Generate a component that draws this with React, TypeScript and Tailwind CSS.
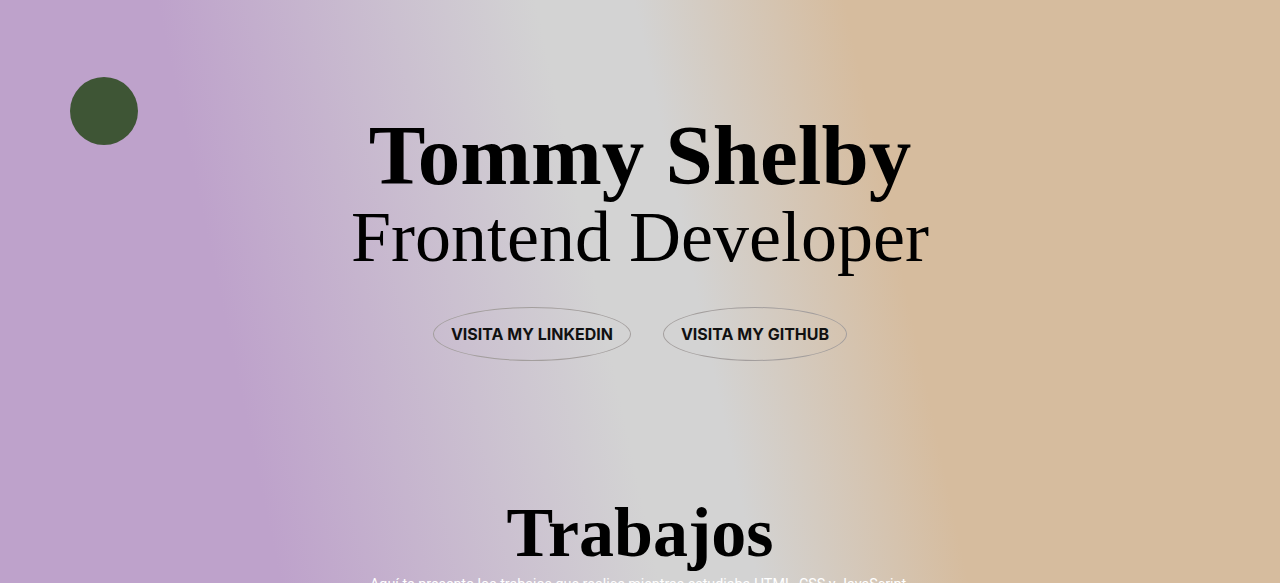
import React from "react";

const links = [
    { label: "Visita my LinkedIn", href: "#linkedin" },
    { label: "Visita my GitHub", href: "#github" },
];

export default function App() {
    return (
        <div className="relative h-screen w-full overflow-hidden bg-[linear-gradient(78deg,#bea2cb_20%,#d3d3d3_47%,#d3d3d3_54%,#d6bc9e_69%)]">
            {/* decorative dot */}
            <div className="absolute left-[70px] top-[77px] h-[68px] w-[68px] rounded-full bg-[#3e5535]" />

            <header className="flex flex-col items-center pt-[113px] text-black font-['Liberation_Serif',serif]">
                <h1 className="text-[85px] font-bold leading-none">Tommy Shelby</h1>
                <h2 className="mt-[3px] text-[72px] font-normal leading-none">Frontend Developer</h2>
                <div className="mt-[34px] flex gap-8">
                    {links.map(link => (
                        <a
                            key={link.href}
                            href={link.href}
                            className="flex h-[54px] items-center rounded-[50%] border border-[#a39e9d] px-[17px] font-['Inter',sans-serif] text-[16px] font-bold uppercase text-[#111]"
                        >
                            {link.label}
                        </a>
                    ))}
                </div>
            </header>

            <section className="mt-[137px] flex flex-col items-center">
                <h2 className="font-['Liberation_Serif',serif] text-[70px] font-bold leading-none text-black">Trabajos</h2>
                <p className="mt-[6px] font-['Roboto',sans-serif] text-[14.3px] text-white">
                    Aquí te presento los trabajos que realice mientras estudiaba HTML, CSS y JavaScript.
                </p>
            </section>
        </div>
    );
}
